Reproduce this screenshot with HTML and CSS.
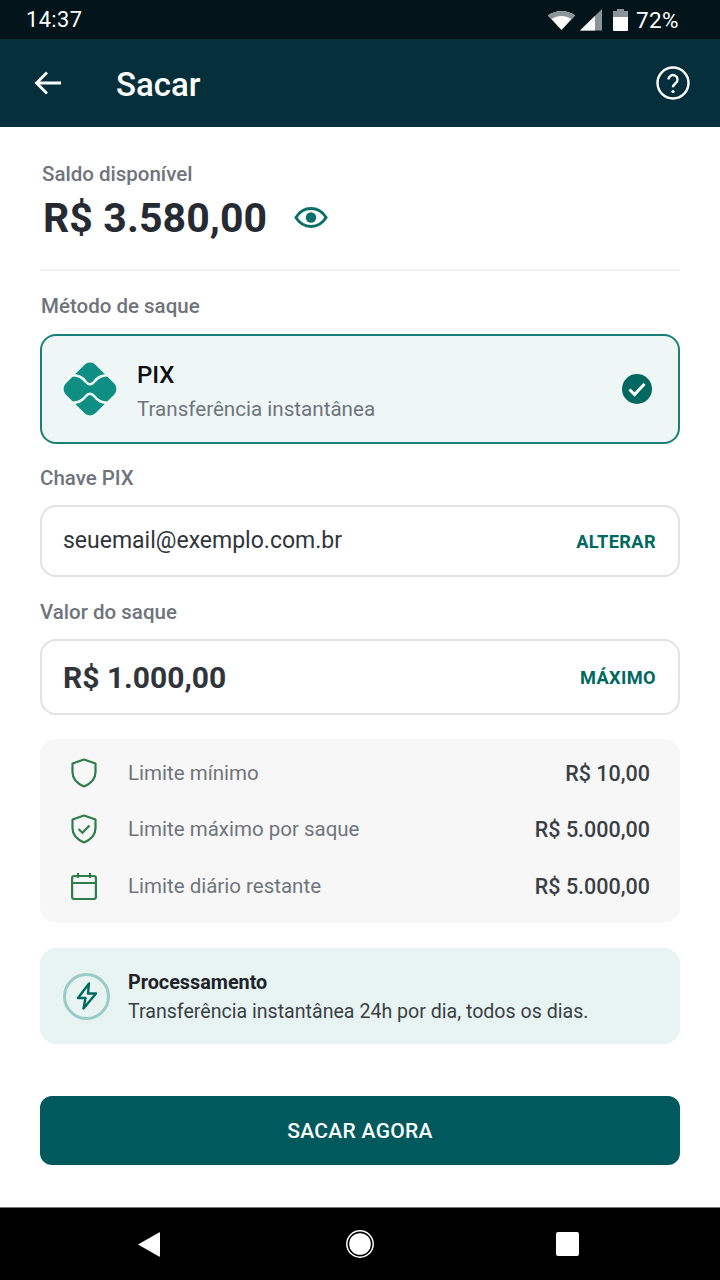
FILE: index.html
```html
<!DOCTYPE html>
<html lang="pt-BR">
<head>
<meta charset="utf-8">
<title>Sacar</title>
<link rel="stylesheet" href="styles.css">
</head>
<body>
<div class="screen">
  <div class="status">
    <span class="clock">14:37</span>
    <div class="status-right">
      <svg class="st-wifi" width="27" height="20" viewBox="0 0 27 20"><path d="M0 5.500C8 -.5 19 -.5 27 5.500L13.500 20z" fill="#fff"/><path d="M0 5.500C8 -.5 19 -.5 27 5.500L23.500 9.300C17 5 10 5 3.500 9.300z" fill="#8b9599"/></svg>
      <svg class="st-signal" width="22" height="22" viewBox="0 0 22 22"><path d="M0 21.500L22 0V21.500z" fill="#8b9599"/><path d="M0 21.500L15 7V21.500z" fill="#fff"/></svg>
      <svg class="st-batt" width="15" height="22" viewBox="0 0 15 22"><path d="M4.500 0h6v2h3.500a1 1 0 0 1 1 1v18a1 1 0 0 1-1 1H1a1 1 0 0 1-1-1V3a1 1 0 0 1 1-1h3.500z" fill="#fff"/><path d="M4.500 0h6v2h3.500a1 1 0 0 1 1 1v5H0V3a1 1 0 0 1 1-1h3.500z" fill="#8b9599"/></svg>
      <span class="pct">72%</span>
    </div>
  </div>
  <header class="appbar">
    <svg class="back" width="28" height="26" viewBox="0 0 28 26"><path d="M27 13H3M13 2.500L2.500 13 13 23.500" fill="none" stroke="#fff" stroke-width="2.800"/></svg>
    <h1 class="title">Sacar</h1>
    <svg class="help" width="34" height="34" viewBox="0 0 34 34"><circle cx="17" cy="17" r="15.500" fill="none" stroke="#fff" stroke-width="2.400"/><path d="M12.500 13.500a4.500 4.500 0 1 1 7.200 3.600c-1.700 1.300-2.700 2-2.700 4.200" fill="none" stroke="#fff" stroke-width="2.400"/><circle cx="17" cy="25.500" r="1.600" fill="#fff"/></svg>
  </header>
  <main class="content">
    <div class="label balance-label">Saldo disponível</div>
    <div class="balance-row">
      <span class="balance">R$ 3.580,00</span>
      <svg class="eye" width="34" height="23" viewBox="0 0 36 24"><path d="M2 12C6 5.500 11.500 2.500 18 2.500S30 5.500 34 12C30 18.500 24.500 21.500 18 21.500S6 18.500 2 12z" fill="none" stroke="#0a6f6a" stroke-width="3"/><circle cx="18" cy="12" r="5.500" fill="#0a6f6a"/></svg>
    </div>
    <div class="divider"></div>
    <div class="label method-label">Método de saque</div>
    <div class="pix-card">
      <svg class="pix-logo" width="54" height="54" viewBox="0 0 54 54"><rect x="6" y="6" width="42" height="42" rx="8" transform="rotate(45 27 27)" fill="#0f8f83"/><path d="M6 13C16 13 19.500 15.500 22.500 19.500Q27 25 31.500 19.500C34.500 15.500 38 13 48 13M6 41C16 41 19.500 38.500 22.500 34.500Q27 29 31.500 34.500C34.500 38.500 38 41 48 41" fill="none" stroke="#eef7f6" stroke-width="2.600"/></svg>
      <div class="pix-text">
        <div class="pix-name">PIX</div>
        <div class="pix-sub">Transferência instantânea</div>
      </div>
      <svg class="pix-check" width="30" height="30" viewBox="0 0 30 30"><circle cx="15" cy="15" r="15" fill="#00695f"/><path d="M7.500 15.500l5 5L22.500 10" fill="none" stroke="#fff" stroke-width="3"/></svg>
    </div>
    <div class="label key-label">Chave PIX</div>
    <div class="field key-field">
      <span class="field-value">seuemail@exemplo.com.br</span>
      <span class="field-action">ALTERAR</span>
    </div>
    <div class="label amount-label">Valor do saque</div>
    <div class="field amount-field">
      <span class="field-amount">R$ 1.000,00</span>
      <span class="field-action">MÁXIMO</span>
    </div>
    <section class="limits">
      <div class="limit-row">
        <svg class="limit-icon" width="26" height="30" viewBox="0 0 26 30"><path d="M13 1.500L24.500 5.500V14c0 7-4.500 11.500-11.500 14.500C6 25.500 1.500 21 1.500 14V5.500z" fill="none" stroke="#2e7d4a" stroke-width="2.200" stroke-linejoin="round"/></svg>
        <span class="limit-name">Limite mínimo</span>
        <span class="limit-value">R$ 10,00</span>
      </div>
      <div class="limit-row">
        <svg class="limit-icon" width="26" height="30" viewBox="0 0 26 30"><path d="M13 1.500L24.500 5.500V14c0 7-4.500 11.500-11.500 14.500C6 25.500 1.500 21 1.500 14V5.500z" fill="none" stroke="#2e7d4a" stroke-width="2.200" stroke-linejoin="round"/><path d="M7.500 15l4 3.800L18.500 11.500" fill="none" stroke="#2e7d4a" stroke-width="2.200"/></svg>
        <span class="limit-name">Limite máximo por saque</span>
        <span class="limit-value">R$ 5.000,00</span>
      </div>
      <div class="limit-row">
        <svg class="limit-icon" width="26" height="28" viewBox="0 0 26 28"><rect x="1.100" y="4" width="23.800" height="23" rx="2" fill="none" stroke="#2e7d4a" stroke-width="2.200"/><path d="M1.100 11h23.800M7 1v5M19 1v5" fill="none" stroke="#2e7d4a" stroke-width="2.200"/></svg>
        <span class="limit-name">Limite diário restante</span>
        <span class="limit-value">R$ 5.000,00</span>
      </div>
    </section>
    <section class="info">
      <div class="info-icon">
        <svg width="22" height="28" viewBox="0 0 22 28"><path d="M13 1.500L2 16h7.500L7.500 26.500 20 11.500h-8z" fill="none" stroke="#00695f" stroke-width="2.400" stroke-linejoin="round"/></svg>
      </div>
      <div class="info-text">
        <div class="info-title">Processamento</div>
        <div class="info-sub">Transferência instantânea 24h por dia, todos os dias.</div>
      </div>
    </section>
    <button class="cta">SACAR AGORA</button>
  </main>
  <nav class="navbar">
    <svg width="22" height="25" viewBox="0 0 22 25"><path d="M22 1a.7.7 0 0 0-1-.6L0 12.500l21 12.100a.7.7 0 0 0 1-.6z" fill="#fff"/></svg>
    <svg class="nav-home" width="28" height="28" viewBox="0 0 28 28"><circle cx="14" cy="14" r="13.200" fill="none" stroke="#fff" stroke-width="1.500"/><circle cx="14" cy="14" r="10.800" fill="#fff"/></svg>
    <svg width="23" height="24" viewBox="0 0 23 24"><rect width="23" height="24" rx="2" fill="#fff"/></svg>
  </nav>
</div>
</body>
</html>
```
FILE: styles.css
```css
* { box-sizing: border-box; }
html, body { margin: 0; padding: 0; }
body { font-family: Roboto, "Noto Sans", sans-serif; background: #fff; }
.screen { width: 720px; height: 1280px; display: flex; flex-direction: column; overflow: hidden; }

.status { height: 39px; background: #03141a; color: #fff; display: flex; align-items: center; justify-content: space-between; padding: 0 41px 0 26px; flex: none; }
.clock { font-size: 21.800px; letter-spacing: .4px; }
.status-right { display: flex; align-items: center; }
.st-wifi { margin-right: 5px; }
.st-signal { margin-right: 11px; }
.st-batt { margin-right: 8px; }
.pct { font-size: 22.500px; letter-spacing: .4px; }

.appbar { height: 88px; background: #05303b; display: flex; align-items: center; padding: 0 30px 0 34px; flex: none; }
.title { margin: 2px 0 0 54px; font-size: 33px; font-weight: 500; color: #fff; flex: 1; }
.help { flex: none; }

.content { flex: 1; padding: 0 40px; display: flex; flex-direction: column; }
.label { font-size: 20.500px; line-height: 24px; color: #6f747c; font-weight: 500; }
.balance-label { margin: 35px 0 0 2px; }
.balance-row { display: flex; align-items: center; margin: 6px 0 0 3px; height: 52px; }
.balance { font-size: 41px; font-weight: 700; color: #262b33; letter-spacing: .1px; }
.eye { margin: -2px 0 0 27px; }
.divider { height: 2px; background: #eff0f1; margin-top: 25px; }
.method-label { margin: 23px 0 0 1px; }

.pix-card { height: 110px; margin-top: 16px; border: 2px solid #1a8077; border-radius: 16px; background: #eef7f6; display: flex; align-items: center; padding: 0 26px 0 21px; }
.pix-logo { flex: none; }
.pix-text { flex: 1; margin-left: 20px; padding-top: 3px; }
.pix-name { font-size: 24px; line-height: 30px; font-weight: 500; color: #0c0f12; }
.pix-sub { font-size: 20.600px; line-height: 26px; margin-top: 6px; color: #6f747c; }

.key-label { margin-top: 22px; }
.field { border: 2px solid #e0e2e4; border-radius: 16px; display: flex; align-items: center; justify-content: space-between; padding: 0 22px 0 21px; background: #fff; }
.key-field { height: 72px; margin-top: 15px; }
.field-value { font-size: 23px; color: #30353c; margin-bottom: 2px; }
.field-action { font-size: 18.200px; font-weight: 700; color: #00695f; letter-spacing: .4px; }
.amount-label { margin-top: 23px; }
.amount-field { height: 76px; margin-top: 15px; }
.field-amount { font-size: 30px; font-weight: 700; color: #30353c; }

.limits { margin-top: 24px; height: 184px; background: #f7f7f7; border-radius: 16px; padding: 6px 30px 8px 30px; display: flex; flex-direction: column; }
.limit-row { height: 56px; display: flex; align-items: center; }
.limit-row:last-child { height: 58px; }
.limit-icon { flex: none; margin-left: 1px; }
.limit-name { flex: 1; margin-left: 31px; font-size: 20.500px; color: #6f747c; }
.limit-value { font-size: 21.500px; font-weight: 500; color: #3a3f46; }

.info { margin-top: 25px; height: 96px; background: #e8f4f2; border-radius: 16px; display: flex; align-items: center; padding: 0 23px; }
.info-icon { width: 47px; height: 47px; border: 3px solid #9accc6; border-radius: 50%; display: flex; align-items: center; justify-content: center; flex: none; }
.info-text { margin-left: 18px; padding-top: 2px; }
.info-title { font-size: 19.800px; line-height: 26px; font-weight: 700; color: #1e2329; }
.info-sub { font-size: 19.600px; line-height: 26px; margin-top: 3px; color: #3a3f46; }

.cta { margin-top: 52px; height: 69px; border: 0; border-radius: 12px; background: #00595c; color: #fff; font-family: inherit; font-size: 21px; font-weight: 500; letter-spacing: .3px; }

.navbar { height: 73px; background: #000; flex: none; border-top: 1px solid #777; display: flex; align-items: center; justify-content: space-between; padding: 0 141px 0 138px; }
.nav-home { margin-left: 4px; }
```
